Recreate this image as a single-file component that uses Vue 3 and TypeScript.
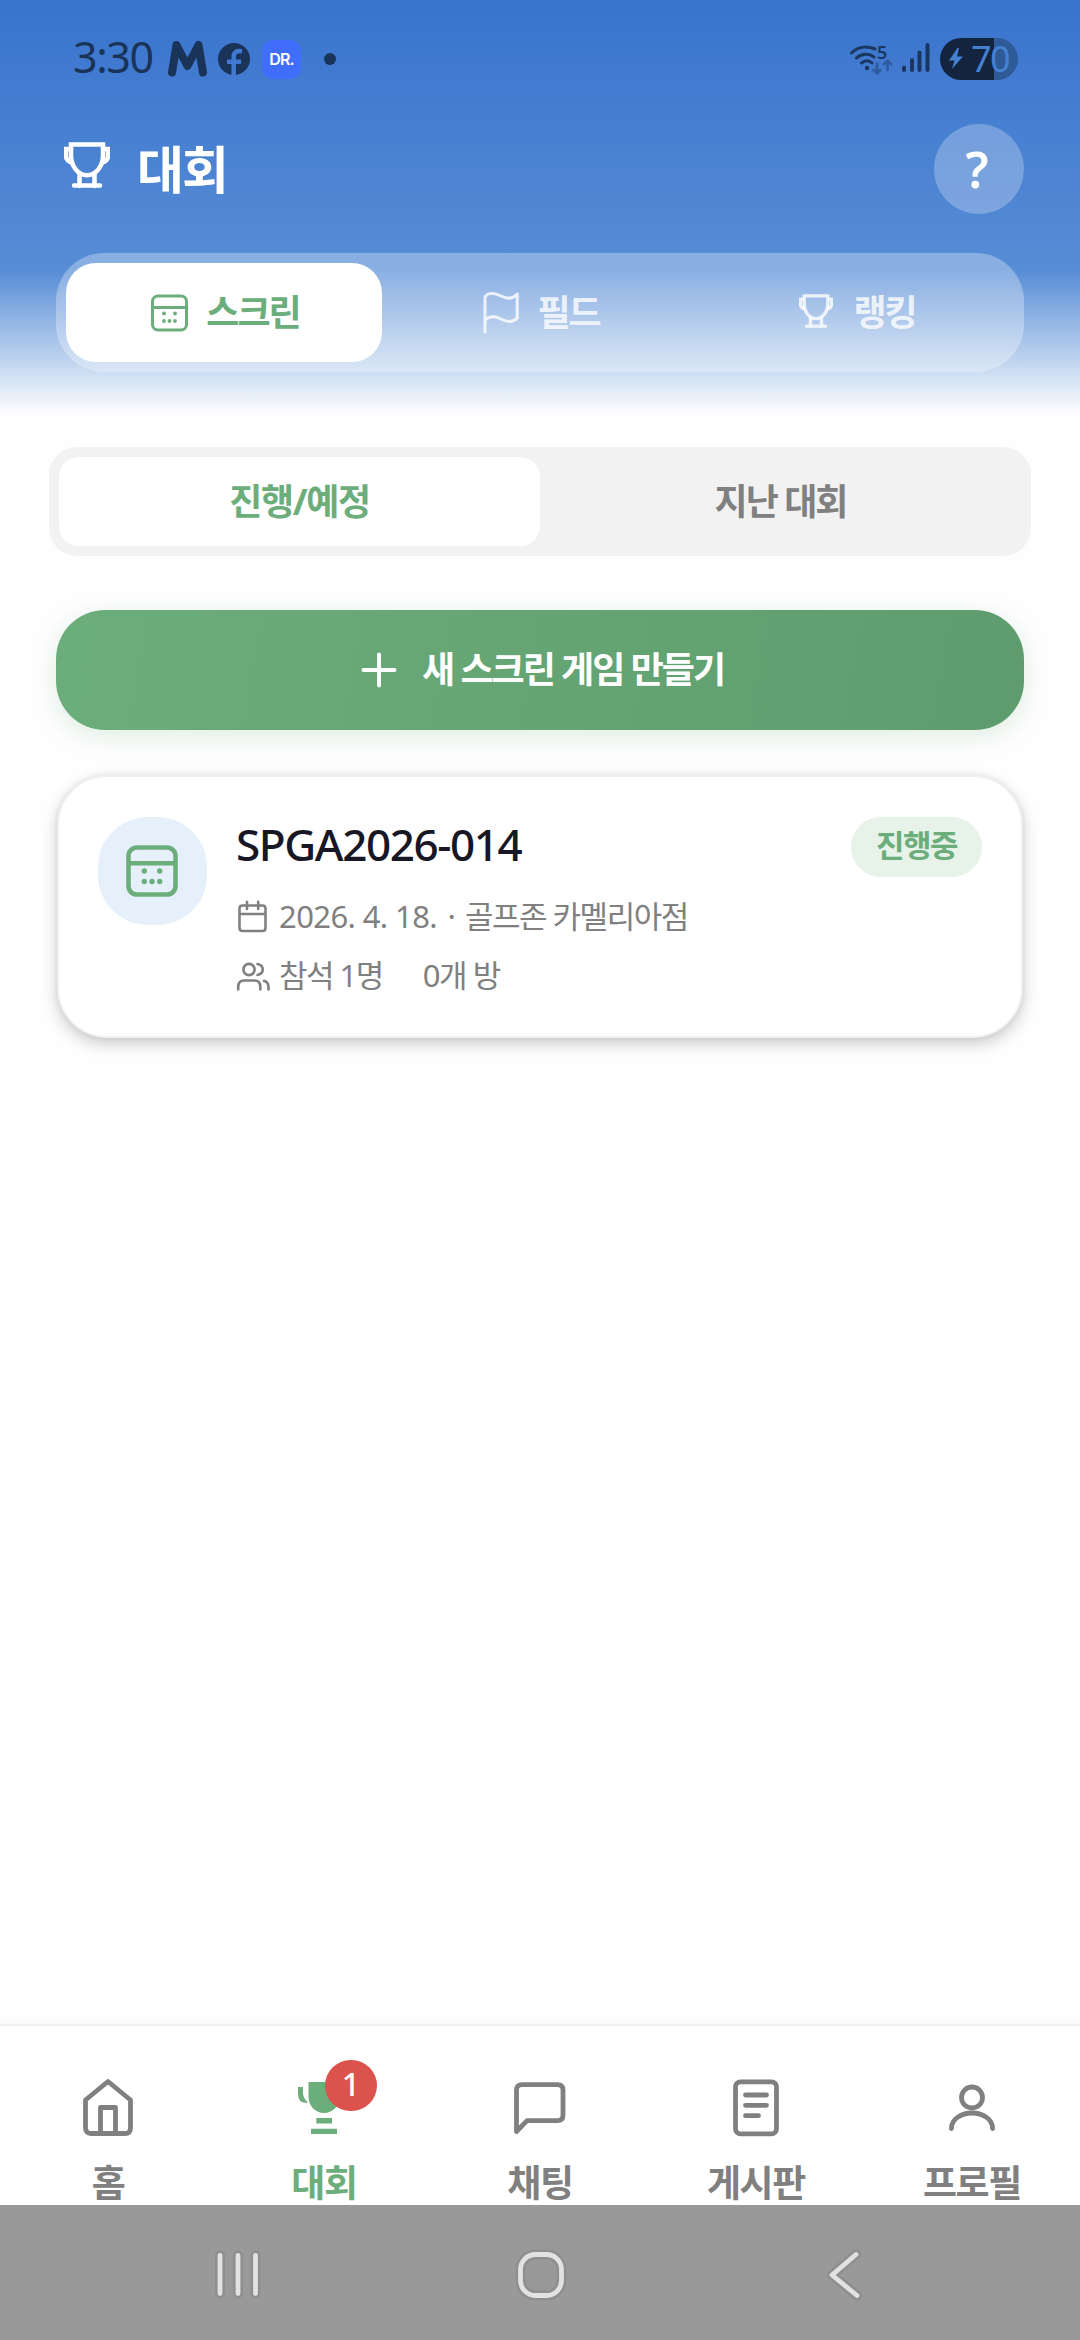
<script setup lang="ts">
type IconName = 'home' | 'trophy' | 'chat' | 'board' | 'profile'

interface NavItem {
  icon: IconName
  label: string
  active?: boolean
  badge?: number
}

const navItems: NavItem[] = [
  { icon: 'home', label: '홈' },
  { icon: 'trophy', label: '대회', active: true, badge: 1 },
  { icon: 'chat', label: '채팅' },
  { icon: 'board', label: '게시판' },
  { icon: 'profile', label: '프로필' },
]

const event = {
  title: 'SPGA2026-014',
  status: '진행중',
  date: '2026. 4. 18.',
  place: '골프존 카멜리아점',
  attendees: '참석 1명',
  rooms: '0개 방',
}
</script>

<template>
  <div class="screen">
    <header class="hero">
      <div class="status-bar">
        <div class="status-left">
          <span class="clock">3:30</span>
          <svg class="mail" width="39" height="38" viewBox="0 0 39 38">
            <path d="M4 32.500L8.500 5L19.500 26L30.500 5L35 32.500" />
          </svg>
          <svg class="fb" width="32" height="32" viewBox="0 0 32 32">
            <circle cx="16" cy="16" r="16" />
            <path d="M15.700 32V14C15.700 9 18 7.700 24 8.200M9 18.800H23" />
          </svg>
          <span class="dr">DR.</span>
          <i class="dot"></i>
        </div>
        <div class="status-right">
          <div class="wifi">
            <svg width="46" height="36" viewBox="0 0 46 36">
              <g fill="none" stroke="#1b3760" stroke-width="3" stroke-linecap="round">
                <path d="M2.500 12C9 6 17 4.500 26 8" />
                <path d="M7.500 17C13 12.300 20 12.300 25 16" />
                <path d="M12.500 22C16 19.200 20 19.200 23 22" />
              </g>
              <circle cx="18" cy="27" r="2.200" fill="#1b3760" />
              <g fill="none" stroke="#2f5c9e" stroke-width="2.800" stroke-linecap="round" stroke-linejoin="round">
                <path d="M28 23V32M24.500 29L28 32.300L31.500 29" />
                <path d="M38.500 29V20M35 23L38.500 19.700L42 23" />
              </g>
            </svg>
            <span class="wifi-band">5</span>
          </div>
          <svg class="signal" width="28" height="30" viewBox="0 0 28 30">
            <path d="M2 24.500V27M10 17V27M17.500 9.500V27M25.500 2V27" />
          </svg>
          <div class="battery">
            <svg width="16" height="24" viewBox="0 0 16 24">
              <path d="M9.500 1L1 13.500H6.500L4 22L15 9.500H9L11 1Z" fill="#4580d2" />
            </svg>
            <span>70</span>
          </div>
        </div>
      </div>

      <div class="title-row">
        <svg class="title-icon" width="46" height="48" viewBox="0 0 46 48">
          <path d="M7 3.500H39V15C39 25 32 34.200 23 34.200S7 25 7 15Z" />
          <path d="M7 8H2V15C2 19 4 20.500 8 21.500M39 8H44V15C44 19 42 20.500 38 21.500" />
          <path d="M15.500 33V45M30.500 33V45M10 44.500H36" />
        </svg>
        <h1>대회</h1>
        <button class="help" type="button">?</button>
      </div>

      <nav class="tabs">
        <button class="tab tab-active" type="button">
          <svg width="37" height="38" viewBox="0 0 37 38">
            <g fill="none" stroke="currentColor" stroke-width="3">
              <rect x="1.500" y="2" width="34" height="34" rx="5.500" />
              <path d="M2 13.500H35" />
            </g>
            <g fill="currentColor">
              <circle cx="13" cy="19.500" r="1.900" /><circle cx="24" cy="19.500" r="1.900" />
              <circle cx="13" cy="27" r="1.900" /><circle cx="18.500" cy="27" r="1.900" /><circle cx="24" cy="27" r="1.900" />
            </g>
          </svg>
          <span>스크린</span>
        </button>
        <button class="tab" type="button">
          <svg width="36" height="42" viewBox="0 0 36 42">
            <path
              d="M2 40V5C5 0 12 1 18 4S30 7 34.200 2V26C30 31 24 30 18 27S6 24 2 28"
              fill="none" stroke="currentColor" stroke-width="3" stroke-linecap="round" stroke-linejoin="round"
            />
          </svg>
          <span>필드</span>
        </button>
        <button class="tab tab-rank" type="button">
          <svg width="34" height="36" viewBox="0 0 46 48" fill="none" stroke="currentColor" stroke-width="4.500">
            <path d="M7 3.500H39V15C39 25 32 34.200 23 34.200S7 25 7 15Z" />
            <path d="M7 8H2V15C2 19 4 20.500 8 21.500M39 8H44V15C44 19 42 20.500 38 21.500" />
            <path d="M15.500 33V45M30.500 33V45M10 44.500H36" stroke-linecap="round" />
          </svg>
          <span>랭킹</span>
        </button>
      </nav>
    </header>

    <main class="content">
      <div class="segment">
        <button class="seg seg-active" type="button">진행/예정</button>
        <button class="seg" type="button">지난 대회</button>
      </div>

      <button class="create" type="button">
        <svg width="36" height="36" viewBox="0 0 36 36">
          <path d="M18 2.500V33.500M2.500 18H33.500" stroke="#fff" stroke-width="4" stroke-linecap="round" />
        </svg>
        <span>새 스크린 게임 만들기</span>
      </button>

      <article class="card">
        <div class="card-icon">
          <svg width="52" height="52" viewBox="0 0 52 52">
            <g fill="none" stroke="#6cae7b" stroke-width="4.600">
              <rect x="2.500" y="2.500" width="47" height="47" rx="8.500" />
              <path d="M3 18.300H49" />
            </g>
            <g fill="#6cae7b">
              <circle cx="18.300" cy="26" r="2.700" /><circle cx="33.700" cy="26" r="2.700" />
              <circle cx="18.300" cy="36.500" r="2.700" /><circle cx="26" cy="36.500" r="2.700" /><circle cx="33.700" cy="36.500" r="2.700" />
            </g>
          </svg>
        </div>
        <div class="card-body">
          <div class="card-head">
            <h2>{{ event.title }}</h2>
            <span class="status">{{ event.status }}</span>
          </div>
          <div class="meta">
            <svg width="34" height="34" viewBox="0 0 34 34">
              <path d="M6.500 5.500H26.500Q29.500 5.500 29.500 8.500V28Q29.500 31 26.500 31H6.500Q3.500 31 3.500 28V8.500Q3.500 5.500 6.500 5.500ZM3.500 14H29.500M11 1.800V9M22.200 1.800V9" />
            </svg>
            <span class="date">{{ event.date }}</span>
            <span class="sep">·</span>
            <span class="place">{{ event.place }}</span>
          </div>
          <div class="meta meta-people">
            <svg width="34" height="34" viewBox="0 0 34 34">
              <circle cx="13" cy="10.500" r="5.600" />
              <path d="M2.200 30.500V28C2.200 24 4 21.500 8 21.500H18.500C22.500 21.500 24.300 24 24.300 28V30.500M21.500 5C28.500 6.500 28.500 14.500 21.500 16M28 21.800C31.500 22.800 32.500 25.500 32.500 28V30.500" />
            </svg>
            <span class="people">{{ event.attendees }}</span>
            <span class="rooms">{{ event.rooms }}</span>
          </div>
        </div>
      </article>
    </main>

    <nav class="bottom-nav">
      <div v-for="item in navItems" :key="item.icon" class="nav-item" :class="{ 'nav-active': item.active }">
        <div class="nav-icon">
          <svg v-if="item.icon === 'home'" class="line" width="62" height="62" viewBox="0 0 62 62">
            <path d="M31 6.500L53.500 25V53Q53.500 58.500 48 58.500H14Q8.500 58.500 8.500 53V25ZM23.500 58V32.500H38.500V58" />
          </svg>
          <svg v-else-if="item.icon === 'trophy'" width="62" height="62" viewBox="0 0 62 62" fill="currentColor">
            <path d="M15.500 7H46.500V22C46.500 31 39.500 38 31 38S15.500 31 15.500 22Z" />
            <path d="M5 12H10V18Q10 23 15 27.500Q5 29 5 19ZM57 12H52V18Q52 23 47 27.500Q57 29 57 19Z" />
            <path d="M23.300 43H39V48.500H23.300ZM18 53.800H44V59H18Z" />
          </svg>
          <svg v-else-if="item.icon === 'chat'" class="line" width="62" height="62" viewBox="0 0 62 62">
            <path d="M7.500 56.500V15Q7.500 9.700 13 9.700H48.500Q54 9.700 54 15V40Q54 45.700 48.500 45.700H18Z" />
          </svg>
          <svg v-else-if="item.icon === 'board'" class="line" width="62" height="62" viewBox="0 0 62 62">
            <rect x="10.500" y="6.800" width="41" height="52" rx="5" />
            <path d="M20.500 20H41.500M20.500 30.300H41.500M20.500 40.700H33.500" />
          </svg>
          <svg v-else class="line" width="62" height="62" viewBox="0 0 62 62">
            <circle cx="31" cy="22.500" r="10.500" />
            <path d="M10.500 53.500C10 44.500 20 38 31 38S52 44.500 51.500 53.500" />
          </svg>
          <span v-if="item.badge" class="badge">{{ item.badge }}</span>
        </div>
        <span class="nav-label">{{ item.label }}</span>
      </div>
    </nav>

    <footer class="system-nav">
      <div class="sys">
        <svg width="50" height="54" viewBox="0 0 50 54">
          <path class="halo" d="M7 7.500V45.500M25 7.500V45.500M42.500 7.500V45.500" />
          <path class="mark" d="M7 7.500V45.500M25 7.500V45.500M42.500 7.500V45.500" />
        </svg>
      </div>
      <div class="sys">
        <svg width="54" height="54" viewBox="0 0 54 54">
          <rect class="halo" x="6.500" y="6.500" width="41" height="41" rx="15" />
          <rect class="mark" x="6.500" y="6.500" width="41" height="41" rx="15" />
        </svg>
      </div>
      <div class="sys">
        <svg width="40" height="54" viewBox="0 0 40 54">
          <path class="halo" d="M32 6.500L8 27L33 47.500" />
          <path class="mark" d="M32 6.500L8 27L33 47.500" />
        </svg>
      </div>
    </footer>
  </div>
</template>

<style>
body {
  margin: 0;
}
</style>

<style scoped>
.screen {
  width: 1080px;
  height: 2340px;
  display: flex;
  flex-direction: column;
  overflow: hidden;
  background: #fefefe;
  font-family: 'Noto Sans', 'Noto Sans CJK KR', sans-serif;
  color: #808080;
}

.screen * {
  box-sizing: border-box;
}

svg {
  display: block;
  flex: none;
}

span,
h1,
h2 {
  white-space: nowrap;
}

button {
  border: 0;
  padding: 0;
  margin: 0;
  background: none;
  font: inherit;
  color: inherit;
}

.hero {
  height: 415px;
  flex: none;
  background: linear-gradient(#3973cd 0, #578dd6 270px, #fefefe 415px);
}

.status-bar {
  height: 118px;
  padding: 0 62px 0 73px;
  display: flex;
  justify-content: space-between;
  align-items: center;
}

.status-left,
.status-right {
  display: flex;
  align-items: center;
}

.clock {
  width: 95px;
  font-size: 43px;
  line-height: 60px;
  letter-spacing: -1.400px;
  color: #1a3358;
  margin-top: -5px;
}

.mail {
  fill: none;
  stroke: #1a3358;
  stroke-width: 8;
  stroke-linecap: round;
  stroke-linejoin: round;
}

.fb {
  margin-left: 11px;
}

.fb circle {
  fill: #1a3358;
}

.fb path {
  fill: none;
  stroke: #4079cf;
  stroke-width: 4.500;
}

.dr {
  width: 39px;
  height: 39px;
  margin-left: 12px;
  border-radius: 11px;
  background: #416dfb;
  color: #fff;
  font: 600 16px/38px 'Inter', sans-serif;
  letter-spacing: -0.900px;
  text-align: center;
}

.dot {
  width: 12px;
  height: 12px;
  margin-left: 23px;
  border-radius: 50%;
  background: #1a3358;
}

.wifi {
  position: relative;
  margin-right: 7px;
}

.wifi-band {
  position: absolute;
  left: 28px;
  top: -1px;
  font-size: 18px;
  line-height: 25px;
  font-weight: 600;
  color: #1b3760;
}

.signal path {
  stroke: #1b3760;
  stroke-width: 4;
  stroke-linecap: round;
}

.signal {
  margin-top: -2px;
}

.battery {
  width: 78px;
  height: 42px;
  margin-left: 10px;
  padding-left: 8px;
  border-radius: 21px;
  display: flex;
  align-items: center;
  background: linear-gradient(90deg, #13243f 54px, #2f5a98 54px);
  color: #4580d2;
}

.battery span {
  margin-left: 7px;
  font-size: 36px;
  line-height: 42px;
  letter-spacing: -1.500px;
}

.title-row {
  height: 102px;
  padding: 0 56px 0 64px;
  display: flex;
  align-items: center;
}

.title-icon {
  margin-top: -8px;
  fill: none;
  stroke: #fff;
  stroke-width: 4.500;
  stroke-linecap: round;
}

h1 {
  margin: 0 0 0 27px;
  font-size: 51px;
  line-height: 60px;
  font-weight: 700;
  letter-spacing: -2px;
  color: #fff;
}

.help {
  width: 90px;
  height: 90px;
  margin-left: auto;
  padding-right: 4px;
  border-radius: 50%;
  background: rgba(255, 255, 255, 0.25);
  color: #fff;
  font-size: 50px;
  font-weight: 600;
  line-height: 86px;
  text-align: center;
}

.tabs {
  height: 119px;
  margin: 33px 56px 0;
  padding: 10px;
  border-radius: 48px;
  display: flex;
  background: rgba(255, 255, 255, 0.3);
}

.tab {
  flex: 1;
  padding-left: 3px;
  display: flex;
  align-items: center;
  justify-content: center;
  gap: 18px;
  border-radius: 30px;
  font-size: 36px;
  line-height: 50px;
  font-weight: 700;
  letter-spacing: -2px;
  color: rgba(255, 255, 255, 0.8);
}

.tab-rank {
  gap: 20px;
}

.tab-rank svg {
  margin-top: -4px;
}

.tab-active {
  background: #fff;
  color: #6cae7b;
}

.content {
  flex: 1;
  padding-top: 32px;
}

.segment {
  height: 109px;
  margin: 0 49px;
  padding: 10px;
  border-radius: 28px;
  display: flex;
  background: #f2f2f2;
}

.seg {
  flex: 1;
  border-radius: 20px;
  font-size: 36px;
  line-height: 86px;
  font-weight: 700;
  letter-spacing: -2px;
  text-align: center;
}

.seg-active {
  background: #fff;
  color: #6cae7b;
  letter-spacing: -1.400px;
}

.create {
  width: 968px;
  height: 120px;
  margin: 54px 56px 0;
  padding-left: 5px;
  border-radius: 49px;
  display: flex;
  align-items: center;
  justify-content: center;
  gap: 25px;
  background: linear-gradient(100deg, #6cae7b, #5e9c6d);
  box-shadow: 0 6px 24px rgba(108, 174, 123, 0.22);
  color: #fff;
  font-size: 36px;
  line-height: 50px;
  font-weight: 700;
  letter-spacing: -2px;
}

.card {
  height: 263px;
  margin: 45px 57px 0;
  padding: 40px 39px 0;
  border: 2px solid #f0f0f0;
  border-radius: 50px;
  display: flex;
  gap: 29px;
  background: #fff;
  box-shadow: 0 6px 16px rgba(0, 0, 0, 0.2), 0 0 5px rgba(0, 0, 0, 0.08);
}

.card-icon {
  width: 109px;
  height: 108px;
  flex: none;
  border-radius: 50px;
  display: flex;
  align-items: center;
  justify-content: center;
  background: #e6f0fb;
}

.card-icon svg {
  margin-right: 1px;
}

.card-body {
  flex: 1;
}

.card-head {
  height: 60px;
  display: flex;
  justify-content: space-between;
}

h2 {
  margin: 0;
  font-size: 44px;
  line-height: 54px;
  font-weight: 500;
  letter-spacing: -1.400px;
  color: #171725;
}

.status {
  width: 131px;
  height: 60px;
  border-radius: 30px;
  background: #e7f3e8;
  color: #6cae7b;
  font-size: 31px;
  line-height: 56px;
  font-weight: 700;
  letter-spacing: -1.600px;
  text-align: center;
}

.meta {
  height: 40px;
  margin-top: 20px;
  display: flex;
  align-items: center;
  font-size: 31px;
  line-height: 40px;
  letter-spacing: -1.500px;
}

.meta svg {
  margin-right: 9px;
  fill: none;
  stroke: #808080;
  stroke-width: 2.600;
  stroke-linecap: round;
  stroke-linejoin: round;
}

.meta span {
  margin-top: -3px;
}

.meta-people {
  margin-top: 19px;
}

.date {
  letter-spacing: -0.600px;
}

.sep {
  width: 28px;
  text-align: center;
}

.meta .rooms {
  margin-left: 40px;
}

.bottom-nav {
  height: 181px;
  flex: none;
  padding-top: 49px;
  border-top: 2px solid #eee;
  display: flex;
  background: #fff;
  box-shadow: 0 -2px 10px rgba(0, 0, 0, 0.03);
}

.nav-item {
  width: 216px;
  display: flex;
  flex-direction: column;
  align-items: center;
}

.nav-icon {
  position: relative;
  width: 62px;
  height: 62px;
}

.line {
  fill: none;
  stroke: currentColor;
  stroke-width: 4.800;
  stroke-linecap: round;
  stroke-linejoin: round;
}

.nav-active {
  color: #6cae7b;
}

.badge {
  position: absolute;
  left: 32px;
  top: -15px;
  width: 52px;
  height: 51px;
  border-radius: 26px;
  background: #dc524d;
  color: #fff;
  font-size: 32px;
  line-height: 48px;
  font-weight: 500;
  text-align: center;
}

.nav-label {
  margin-top: 21px;
  font-size: 37px;
  line-height: 50px;
  font-weight: 700;
  letter-spacing: -1.300px;
}

.system-nav {
  position: relative;
  height: 135px;
  flex: none;
  padding: 4px 85px 0 87px;
  display: flex;
  background: #999;
}

.sys {
  flex: 1;
  display: flex;
  align-items: center;
  justify-content: center;
}

.halo,
.mark {
  fill: none;
  stroke-linecap: round;
  stroke-linejoin: round;
}

.halo {
  stroke: #8f8f8f;
  stroke-width: 10;
}

.mark {
  stroke: #e2e2e2;
  stroke-width: 4.800;
}
</style>
